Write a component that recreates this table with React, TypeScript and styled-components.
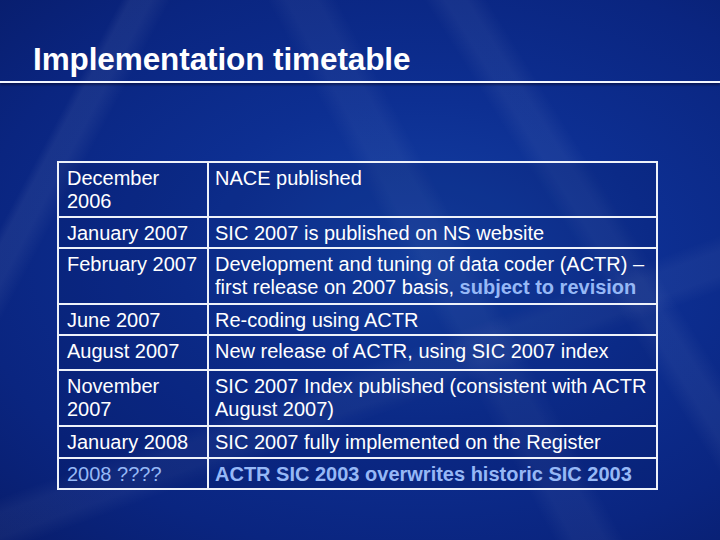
import React from 'react'
import styled, { createGlobalStyle } from 'styled-components'

const Global = createGlobalStyle`
  html, body {
    margin: 0;
    padding: 0;
  }
  body {
    font-family: "Liberation Sans", Arial, sans-serif;
    background: #0a2682;
  }
`

const Slide = styled.div`
  width: 720px;
  height: 540px;
  overflow: hidden;
  display: flex;
  flex-direction: column;
  color: #ffffff;
  background:
    linear-gradient(118deg, transparent 0 12%, rgba(255,255,255,0.06) 13% 15%, transparent 17% 100%),
    linear-gradient(62deg, transparent 0 55%, rgba(255,255,255,0.045) 57% 60%, transparent 62% 100%),
    linear-gradient(58deg, transparent 0 72%, rgba(255,255,255,0.05) 74% 76%, transparent 78% 100%),
    linear-gradient(160deg, transparent 0 62%, rgba(255,255,255,0.045) 64% 67%, transparent 69% 100%),
    radial-gradient(ellipse at 58% 48%, #1542a6 0%, #0d2f92 40%, #0a2580 75%, #081d6c 100%);
`

const Header = styled.div`
  flex-shrink: 0;
  height: 81px;
  padding-left: 33px;
  display: flex;
  align-items: flex-end;
  border-bottom: 2px solid #f2f6ff;
  box-shadow: 0 2px 2px rgba(0, 0, 30, 0.45);
`

const Title = styled.h1`
  margin: 0 0 4px 0;
  font-size: 31.5px;
  font-weight: bold;
  letter-spacing: -0.1px;
  line-height: 36px;
`

const Body = styled.div`
  padding: 78px 0 0 57px;
`

const Table = styled.table`
  width: 601px;
  table-layout: fixed;
  border-collapse: collapse;
  border: 2px solid #eef2fa;
  background: rgba(0, 10, 60, 0.12);
`

const DateCol = styled.col`
  width: 150px;
`

const Row = styled.tr<{ $h: number }>`
  height: ${p => p.$h}px;
  border-top: 2px solid #eef2fa;
`

const Cell = styled.td<{ $first?: boolean; $blue?: boolean }>`
  padding: 4px 0 2px ${p => (p.$first ? '8px' : '6px')};
  vertical-align: top;
  font-size: 20px;
  line-height: 23px;
  color: ${p => (p.$blue ? '#96b8f6' : '#ffffff')};
  border-right: ${p => (p.$first ? '2px solid #eef2fa' : 'none')};
  white-space: pre-line;
`

const Hi = styled.span<{ $bold?: boolean }>`
  color: #96b8f6;
  font-weight: ${p => (p.$bold ? 'bold' : 'normal')};
`

type Entry = { date: string; h: number; text: React.ReactNode; blueDate?: boolean }

const rows: Entry[] = [
  { date: 'December\n2006', h: 55, text: 'NACE published' },
  { date: 'January 2007', h: 31, text: 'SIC 2007 is published on NS website' },
  {
    date: 'February 2007',
    h: 56,
    text: (
      <>
        Development and tuning of data coder (ACTR) –{'\n'}first release on 2007 basis,{' '}
        <Hi $bold>subject to revision</Hi>
      </>
    ),
  },
  { date: 'June 2007', h: 30, text: 'Re-coding using ACTR' },
  { date: 'August 2007', h: 35, text: 'New release of ACTR, using SIC 2007 index' },
  {
    date: 'November\n2007',
    h: 56,
    text: 'SIC 2007 Index published (consistent with ACTR\nAugust 2007)',
  },
  { date: 'January 2008', h: 32, text: 'SIC 2007 fully implemented on the Register' },
  {
    date: '2008 ????',
    h: 30,
    blueDate: true,
    text: <Hi $bold>ACTR SIC 2003 overwrites historic SIC 2003</Hi>,
  },
]

export default function App() {
  return (
    <Slide>
      <Global />
      <Header>
        <Title>Implementation timetable</Title>
      </Header>
      <Body>
        <Table>
          <colgroup>
            <DateCol />
            <col />
          </colgroup>
          <tbody>
            {rows.map((r, i) => (
              <Row key={i} $h={r.h}>
                <Cell $first $blue={r.blueDate}>{r.date}</Cell>
                <Cell>{r.text}</Cell>
              </Row>
            ))}
          </tbody>
        </Table>
      </Body>
    </Slide>
  )
}
